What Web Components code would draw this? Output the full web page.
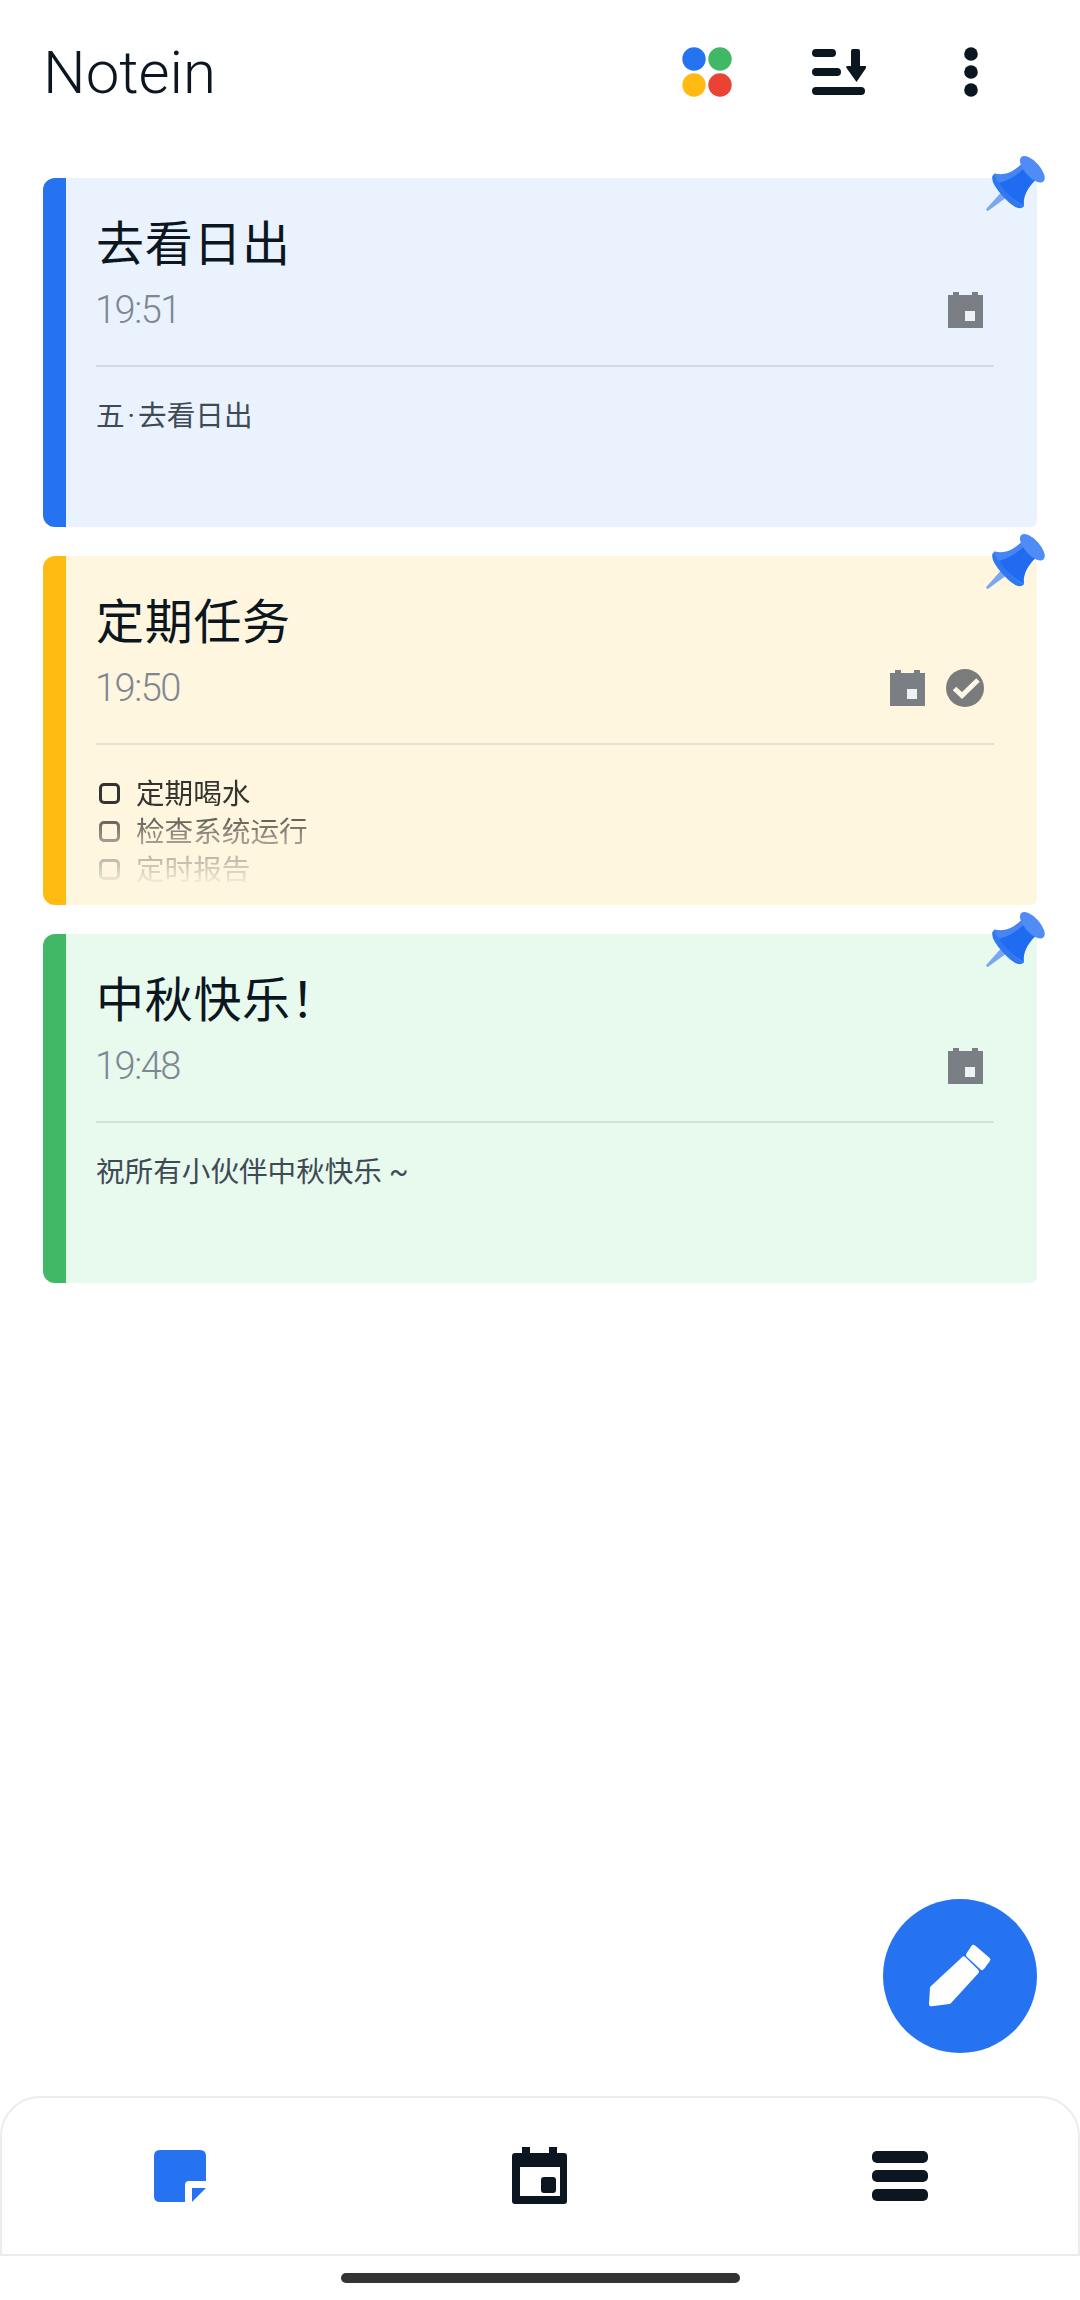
<!DOCTYPE html>
<html>
<head>
<meta charset="utf-8">
<title>Notein</title>
<style>
    html, body {
        margin: 0;
        background: #fff;
        font-family: Roboto, "Noto Sans CJK SC", sans-serif;
    }
</style>
</head>
<body>
<notein-app>
    <notein-header slot="header" title="Notein"></notein-header>

    <note-card color="blue" pinned>
        <span slot="title">去看日出</span>
        <span slot="time">19:51</span>
        五<span style="margin: 0 3px">·</span>去看日出
    </note-card>

    <note-card color="yellow" pinned done>
        <span slot="title">定期任务</span>
        <span slot="time">19:50</span>
        <todo-list>
            <todo-item>定期喝水</todo-item>
            <todo-item>检查系统运行</todo-item>
            <todo-item>定时报告</todo-item>
        </todo-list>
    </note-card>

    <note-card color="green" pinned>
        <span slot="title">中秋快乐！</span>
        <span slot="time">19:48</span>
        祝所有小伙伴中秋快乐 ~
    </note-card>

    <notein-fab slot="fab"></notein-fab>
    <notein-nav slot="nav"></notein-nav>
</notein-app>

<script>
const calendarGray = `
    <svg width="35" height="36" viewBox="0 0 35 36">
        <path fill="#7a7f85" d="M5 0h6v3h13V0h6v3h5v33H0V3h5z"/>
        <rect x="17" y="19" width="10" height="10" fill="#eef1f3"/>
    </svg>`

const checkGray = `
    <svg class="check" width="38" height="38" viewBox="0 0 38 38">
        <circle cx="19" cy="19" r="19" fill="#7a7b7d"/>
        <path d="M8.500 19.500l7.500 7L32 11" fill="none" stroke="#fdf7e6" stroke-width="5"/>
    </svg>`

const pinIcon = `
    <svg width="60" height="60" viewBox="0 0 60 60" style="overflow: visible">
        <g transform="translate(2 55) rotate(48)">
            <path d="M-1.200 0 L-3.800 -24 L3.800 -24 L1.200 0 Q0 1.500 -1.200 0z" fill="#7ba7ee"/>
            <path d="M-22 -30 Q-23 -21 0 -21 Q23 -21 22 -30 Q10 -37 0 -37 Q-10 -37 -22 -30z" fill="#2f78f0"/>
            <path d="M-22 -30 C-20 -25 20 -25 22 -30 C14 -36 11 -43 10 -56 L-11 -56 C-11 -43 -14 -36 -22 -30z" fill="#4685f3"/>
            <path d="M-12 -27 C0 -25.500 8 -26 21 -30 C14 -36 11 -43 10 -56 L-6 -56 C-6 -43 -8 -36 -12 -27z" fill="#1f6cf0"/>
            <ellipse cx="0" cy="-61" rx="16.500" ry="7.500" fill="#4f8cf6"/>
        </g>
    </svg>`

class NoteinApp extends HTMLElement {
    constructor() {
        super()
        this._shadowDom = this.attachShadow({mode: 'open'})
    }
    connectedCallback() {
        this._shadowDom.innerHTML = `
            <style>
                :host {
                    display: flex;
                    flex-direction: column;
                    height: 2300px;
                    position: relative;
                    background: #fff;
                    overflow: hidden;
                }
                .notes {
                    flex: 1;
                    display: flex;
                    flex-direction: column;
                    gap: 29px;
                    padding: 0 43px;
                }
            </style>
            <slot name="header"></slot>
            <div class="notes"><slot></slot></div>
            <slot name="fab"></slot>
            <slot name="nav"></slot>
        `
    }
}

class NoteinHeader extends HTMLElement {
    constructor() {
        super()
        this._shadowDom = this.attachShadow({mode: 'open'})
    }
    connectedCallback() {
        this._shadowDom.innerHTML = `
            <style>
                :host {
                    display: flex;
                    align-items: center;
                    height: 178px;
                    box-sizing: border-box;
                    padding: 0 0 34px 43px;
                }
                .title {
                    flex: 1;
                    margin-top: 2px;
                    font-size: 60px;
                    font-weight: 300;
                    color: #0b1620;
                    line-height: 70px;
                }
                .icons {
                    display: flex;
                    align-items: center;
                    padding-right: 102px;
                    gap: 0;
                }
                svg { display: block; }
                .dots { margin-right: 80px; }
                .sort { margin-right: 98px; }
            </style>
            <div class="title">${this.getAttribute('title')}</div>
            <div class="icons">
                <svg class="dots" width="50" height="50" viewBox="0 0 50 50">
                    <circle cx="12" cy="12" r="11.700" fill="#2673f2"/>
                    <circle cx="38" cy="12" r="11.700" fill="#41b866"/>
                    <circle cx="12" cy="38" r="11.700" fill="#ffbb12"/>
                    <circle cx="38" cy="38" r="11.700" fill="#ea4335"/>
                </svg>
                <svg class="sort" width="54" height="46" viewBox="0 0 54 46" fill="#0b1620">
                    <rect x="0" y="0" width="24" height="8" rx="4"/>
                    <rect x="0" y="19" width="29" height="8" rx="4"/>
                    <rect x="0" y="38" width="53" height="8" rx="4"/>
                    <path d="M39 2q0-2 2-2h5q2 0 2 2v15h5q2 0 1 2L44.500 33 34.500 19q-1-2 1-2h3.500z"/>
                </svg>
                <svg width="14" height="50" viewBox="0 0 14 50" fill="#0b1620">
                    <circle cx="7" cy="7" r="6.800"/>
                    <circle cx="7" cy="25" r="6.800"/>
                    <circle cx="7" cy="43" r="6.800"/>
                </svg>
            </div>
        `
    }
}

const cardColors = {
    blue: {bar: '#2673f2', bg: '#eaf2fe', line: '#d3dae8'},
    yellow: {bar: '#ffbb12', bg: '#fff6e0', line: '#e8e0cc'},
    green: {bar: '#41b866', bg: '#e8f9ee', line: '#d2e2d8'}
}

class NoteCard extends HTMLElement {
    constructor() {
        super()
        this._shadowDom = this.attachShadow({mode: 'open'})
    }
    connectedCallback() {
        const color = cardColors[this.getAttribute('color')]
        this._shadowDom.innerHTML = `
            <style>
                :host {
                    display: block;
                    position: relative;
                    height: 349px;
                }
                .card {
                    display: flex;
                    height: 100%;
                    border-radius: 12px 6px 6px 12px;
                    overflow: hidden;
                    background: ${color.bg};
                }
                .bar {
                    width: 23px;
                    flex: none;
                    background: ${color.bar};
                }
                .content {
                    flex: 1;
                    min-width: 0;
                    padding: 39px 43px 0 30px;
                }
                .title {
                    font-size: 48px;
                    letter-spacing: 0.700px;
                    line-height: 56px;
                    color: #0b1620;
                }
                .meta {
                    display: flex;
                    align-items: center;
                    justify-content: space-between;
                    height: 44px;
                    margin-top: 14px;
                    padding-right: 11px;
                }
                .time {
                    margin: 2px 0 0 -1px;
                    font-size: 38px;
                    font-weight: 300;
                    letter-spacing: -1.500px;
                    color: #7e8792;
                }
                .status {
                    display: flex;
                    align-items: center;
                    gap: 21px;
                    margin-top: 2px;
                }
                .status svg { display: block; }
                .status .check { margin-right: -1px; }
                .divider {
                    height: 2px;
                    margin-top: 34px;
                    background: ${color.line};
                }
                .body {
                    margin-top: 30px;
                    font-size: 28.600px;
                    line-height: 38px;
                    color: #3f4a55;
                }
                .pin {
                    position: absolute;
                    top: -23px;
                    right: -8px;
                }
                .pin svg { display: block; }
            </style>
            <div class="card">
                <div class="bar"></div>
                <div class="content">
                    <div class="title"><slot name="title"></slot></div>
                    <div class="meta">
                        <div class="time"><slot name="time"></slot></div>
                        <div class="status">
                            ${calendarGray}
                            ${this.hasAttribute('done') ? checkGray : ''}
                        </div>
                    </div>
                    <div class="divider"></div>
                    <div class="body"><slot></slot></div>
                </div>
            </div>
            ${this.hasAttribute('pinned') ? `<div class="pin">${pinIcon}</div>` : ''}
        `
    }
}

class TodoList extends HTMLElement {
    constructor() {
        super()
        this._shadowDom = this.attachShadow({mode: 'open'})
    }
    connectedCallback() {
        this._shadowDom.innerHTML = `
            <style>
                :host {
                    display: block;
                    -webkit-mask-image: linear-gradient(#000 0, #000 30px, rgba(0,0,0,.5) 62px, rgba(0,0,0,.25) 90px, transparent 112px);
                    mask-image: linear-gradient(#000 0, #000 30px, rgba(0,0,0,.5) 62px, rgba(0,0,0,.25) 90px, transparent 112px);
                }
            </style>
            <slot></slot>
        `
    }
}

class TodoItem extends HTMLElement {
    constructor() {
        super()
        this._shadowDom = this.attachShadow({mode: 'open'})
    }
    connectedCallback() {
        this._shadowDom.innerHTML = `
            <style>
                :host {
                    display: flex;
                    align-items: center;
                    height: 38px;
                    padding-left: 3px;
                    color: #33332f;
                }
                .box {
                    width: 21px;
                    height: 21px;
                    box-sizing: border-box;
                    border: 3px solid #33332f;
                    border-radius: 5px;
                    margin: -2px 16px 0 0;
                }
            </style>
            <div class="box"></div>
            <slot></slot>
        `
    }
}

class NoteinFab extends HTMLElement {
    constructor() {
        super()
        this._shadowDom = this.attachShadow({mode: 'open'})
    }
    connectedCallback() {
        // floats over the page, so it is the one absolute box here
        this._shadowDom.innerHTML = `
            <style>
                :host {
                    position: absolute;
                    right: 43px;
                    bottom: 247px;
                    width: 154px;
                    height: 154px;
                    border-radius: 50%;
                    background: #2673f2;
                }
                svg { display: block; }
            </style>
            <svg width="154" height="154" viewBox="0 0 154 154" fill="#fff" stroke="#fff" stroke-width="5" stroke-linejoin="round">
                <path d="M49.500 89 L80.700 60 L93.500 72.500 L66 102.500 L48.500 104.800z"/>
                <path d="M85.500 56 L90.500 48.500 L104.800 60.700 L99 68.500z"/>
            </svg>
        `
    }
}

class NoteinNav extends HTMLElement {
    constructor() {
        super()
        this._shadowDom = this.attachShadow({mode: 'open'})
    }
    connectedCallback() {
        this._shadowDom.innerHTML = `
            <style>
                :host { display: block; }
                .bar {
                    display: grid;
                    grid-template-columns: repeat(3, 1fr);
                    height: 160px;
                    box-sizing: border-box;
                    border: 2px solid #ececec;
                    border-radius: 40px 40px 0 0;
                }
                .item {
                    display: flex;
                    align-items: center;
                    justify-content: center;
                    padding-bottom: 1px;
                }
                .item:first-child { padding-right: 2px; }
                .item:last-child { padding-left: 2px; }
                svg { display: block; }
                .home {
                    display: flex;
                    justify-content: center;
                    padding-top: 17px;
                    height: 44px;
                    box-sizing: border-box;
                }
                .handle {
                    width: 399px;
                    height: 10px;
                    border-radius: 5px;
                    background: #333;
                }
            </style>
            <div class="bar">
                <div class="item">
                    <svg width="52" height="52" viewBox="0 0 52 52" fill="#2673f2">
                        <path d="M6 0h40q6 0 6 6v25H35q-4 0-4 4v17H6q-6 0-6-6V6q0-6 6-6z"/>
                        <path d="M38 38h14L38 52z"/>
                    </svg>
                </div>
                <div class="item">
                    <svg width="55" height="57" viewBox="0 0 55 57" fill="#0b1620">
                        <path fill-rule="evenodd" d="M10 0h8v6h19V0h8v6h7q3 0 3 3v45q0 3-3 3H3q-3 0-3-3V9q0-3 3-3h7zM8 20v29h40V20z"/>
                        <rect x="29" y="30" width="15" height="16" rx="3"/>
                    </svg>
                </div>
                <div class="item">
                    <svg width="56" height="50" viewBox="0 0 56 50" fill="#0b1620">
                        <rect y="0" width="56" height="12" rx="5"/>
                        <rect y="19" width="56" height="12" rx="5"/>
                        <rect y="38" width="56" height="12" rx="5"/>
                    </svg>
                </div>
            </div>
            <div class="home"><div class="handle"></div></div>
        `
    }
}

window.customElements.define('notein-app', NoteinApp)
window.customElements.define('notein-header', NoteinHeader)
window.customElements.define('note-card', NoteCard)
window.customElements.define('todo-list', TodoList)
window.customElements.define('todo-item', TodoItem)
window.customElements.define('notein-fab', NoteinFab)
window.customElements.define('notein-nav', NoteinNav)
</script>
</body>
</html>
